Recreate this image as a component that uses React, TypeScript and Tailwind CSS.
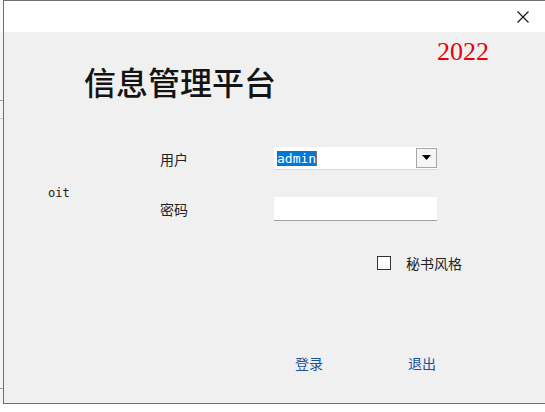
export default function App() {
  return (
    <div className="w-[545px] h-[412px] bg-white flex overflow-hidden">
      {/* desktop strip left of the window */}
      <div className="w-[3px] h-[404px] flex flex-col bg-[#f4f4f4]">
        <div className="h-[32px] bg-[#fafafa]" />
        <div className="h-[68px]" />
        <div className="h-px bg-[#9a9a9a]" />
        <div className="h-[17px]" />
        <div className="h-px bg-[#c8c8c8]" />
        <div className="h-[269px]" />
        <div className="h-px bg-[#9a9a9a]" />
      </div>

      <div className="w-[542px] h-[404px] border-l border-t border-b border-[#6f6f6f] flex flex-col">
        {/* title bar */}
        <div className="h-[31px] bg-white flex justify-end items-center pr-[15px]">
          <svg width="12" height="12" viewBox="0 0 12 12" className="mr-[1px]">
            <path d="M0.5 0.5 L11.5 11.5 M11.5 0.5 L0.5 11.5" stroke="#111" strokeWidth="1.1" />
          </svg>
        </div>

        {/* client area */}
        <div className="flex-1 bg-[#f0f0f0] flex flex-col">
          <div className="flex justify-end pr-[56px] mt-[7px]">
            <span className="text-[26px] leading-[26px] text-[#e8000b] font-['Liberation_Serif',serif]">2022</span>
          </div>

          <div className="pl-[80px] leading-[32px]">
            <span className="text-[32px] leading-[32px] font-medium text-[#141414] font-['Noto_Sans_CJK_SC',sans-serif]">
              信息管理平台
            </span>
          </div>

          <div className="flex mt-[42px]">
            <div className="w-[156px] pl-[44px]">
              <div className="mt-[40px] text-[12px] leading-[12px] text-[#222] font-['DejaVu_Sans_Mono',monospace]">oit</div>
            </div>
            <div className="grid grid-cols-[114px_163px] grid-rows-[23px_24px] gap-y-[27px] items-center font-['Noto_Sans_CJK_SC',sans-serif] text-[14px] text-[#222]">
              <span className="leading-[20px]">用户</span>
              <div className="h-[23px] bg-white border-b border-[#d9d9d9] flex items-center pl-[3px] pr-0">
                <span className="bg-[#0078d7] text-white text-[13px] leading-[15px] h-[15px] px-0 font-['DejaVu_Sans_Mono',monospace]">admin</span>
                <span className="w-px h-[15px] bg-[#777]" />
                <div className="ml-auto w-[21px] h-[20px] mb-[1px] border border-[#a6a6a6] bg-[#f6f6f6] flex items-center justify-center">
                  <svg width="9" height="5" viewBox="0 0 9 5">
                    <path d="M0 0 H9 L4.5 5 Z" fill="#000" />
                  </svg>
                </div>
              </div>
              <span className="leading-[20px]">密码</span>
              <div className="h-[24px] bg-white border-b border-[#a0a0a0]" />
            </div>
          </div>

          <div className="flex items-center mt-[32px] pl-[373px] font-['Noto_Sans_CJK_SC',sans-serif] text-[14px] text-[#222]">
            <div className="w-[14px] h-[14px] border border-[#333] bg-white" />
            <span className="ml-[15px] leading-[20px]">秘书风格</span>
          </div>

          <div className="flex mt-[80px] pl-[291px] font-['Noto_Sans_CJK_SC',sans-serif] text-[14px] text-[#1d4f9c]">
            <span className="leading-[20px]">登录</span>
            <span className="leading-[20px] ml-[85px]">退出</span>
          </div>
        </div>
      </div>
    </div>
  );
}
